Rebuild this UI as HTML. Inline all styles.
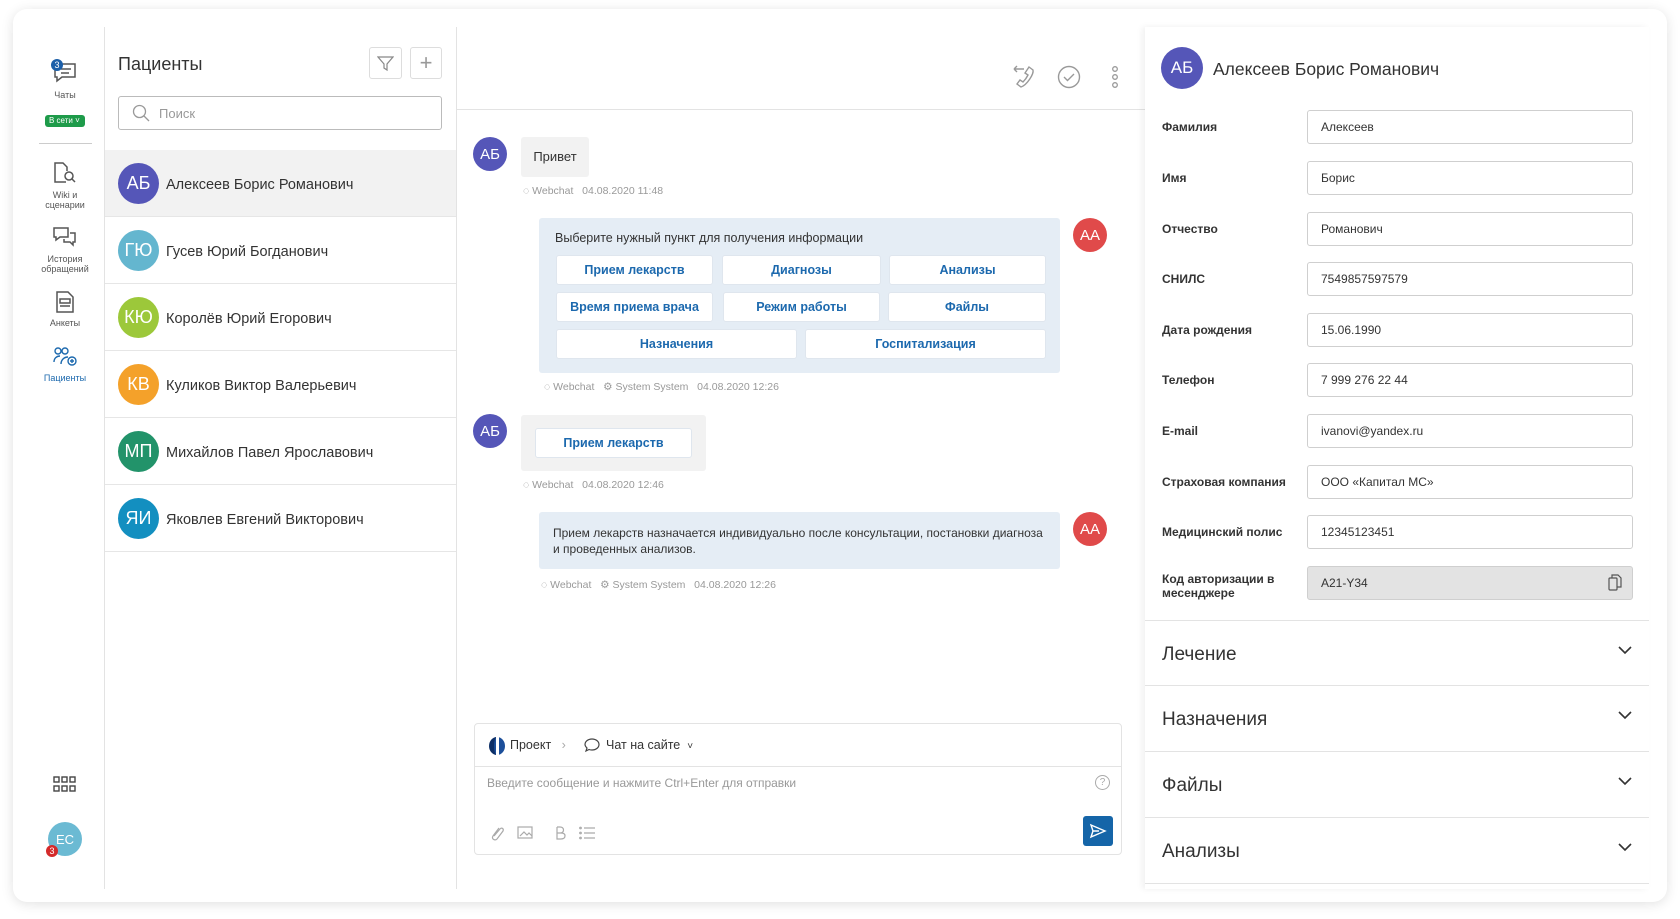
<!DOCTYPE html>
<html><head><meta charset="utf-8"><style>
*{box-sizing:border-box;margin:0;padding:0}
body{width:1680px;height:919px;background:#fff;font-family:"Liberation Sans","DejaVu Sans",sans-serif;color:#333;position:relative;overflow:hidden}
.a{position:absolute}
.card{left:13px;top:9px;width:1654px;height:893px;border-radius:14px;background:#fff;box-shadow:0 2px 12px rgba(0,0,0,.12)}
.av{position:absolute;border-radius:50%;color:#fff;display:flex;align-items:center;justify-content:center}
.sl{position:absolute;left:30px;width:70px;text-align:center;font-size:9px;color:#555;line-height:10px}
.row{position:absolute;left:105px;width:351px;height:67px;border-bottom:1px solid #e6e6e6}
.row .av{left:13px;top:13px;width:41px;height:41px;font-size:18px}
.row span{position:absolute;left:61px;top:27px;font-size:14.5px;color:#333}
.meta{position:absolute;font-size:10.5px;color:#999}
.btn{position:absolute;background:#fff;border:1px solid #dfe6ee;border-radius:3px;color:#1c69ae;font-size:12.5px;font-weight:bold;display:flex;align-items:center;justify-content:center;height:30px}
.lab{position:absolute;left:1162px;font-size:12px;font-weight:bold;color:#333}
.inp{position:absolute;left:1307px;width:326px;height:34px;border:1px solid #cfcfcf;border-radius:3px;padding-left:13px;font-size:12px;line-height:32px;color:#333}
.sec{position:absolute;left:1145px;width:504px;border-bottom:1px solid #e3e3e3;height:66px}
.sec span{position:absolute;left:17px;top:23px;font-size:19px;color:#333}
.sec svg{position:absolute;right:17px;top:25px}
</style></head><body>
<div class="a card"></div>
<!-- sidebar -->
<div class="a" style="left:104px;top:27px;width:1px;height:862px;background:#e3e3e3"></div>
<svg class="a" style="left:52px;top:58px" width="26" height="26" viewBox="0 0 26 26" fill="none" stroke="#555" stroke-width="1.5"><path d="M3 6h20v13H10l-5 4v-4H3z"/><path d="M9 11h10M9 15h8"/></svg>
<div class="av" style="left:51px;top:59px;width:12px;height:12px;background:#1c5fa8;font-size:9px">3</div>
<div class="sl" style="top:90px">Чаты</div>
<div class="a" style="left:45px;top:115px;width:40px;height:12px;background:#1e9b4a;border-radius:3px;color:#fff;font-size:8px;line-height:12px;padding-left:4px">В сети ˅</div>
<div class="a" style="left:39px;top:143px;width:53px;height:1px;background:#ccc"></div>
<svg class="a" style="left:52px;top:161px" width="26" height="24" viewBox="0 0 26 24" fill="none" stroke="#555" stroke-width="1.5"><path d="M14 21H3V2h8l4 4v4"/><circle cx="17" cy="15" r="4"/><path d="M20 18l3 3"/></svg>
<div class="sl" style="top:190px">Wiki и<br>сценарии</div>
<svg class="a" style="left:52px;top:225px" width="26" height="24" viewBox="0 0 26 24" fill="none" stroke="#555" stroke-width="1.5"><path d="M2 3h14v9H8l-4 3v-3H2z"/><path d="M18 8h5v9h-2v3l-3-3h-6v-3"/></svg>
<div class="sl" style="top:254px">История<br>обращений</div>
<svg class="a" style="left:55px;top:290px" width="20" height="24" viewBox="0 0 20 24" fill="none" stroke="#555" stroke-width="1.5"><path d="M2 2h11l5 5v15H2z"/><path d="M5 9h10v4H5zM5 16h10"/></svg>
<div class="sl" style="top:318px">Анкеты</div>
<svg class="a" style="left:52px;top:346px" width="26" height="22" viewBox="0 0 26 22" fill="none" stroke="#1c69ae" stroke-width="1.4"><circle cx="6" cy="5" r="3"/><circle cx="13" cy="5" r="3"/><path d="M2 16c0-4 3-6 6-6M9 18c0-4 3-7 7-7"/><circle cx="20" cy="15" r="4"/><path d="M20 13v4M18 15h4"/></svg>
<div class="sl" style="top:373px;color:#1c69ae">Пациенты</div>
<svg class="a" style="left:53px;top:776px" width="23" height="16" viewBox="0 0 23 16" fill="none" stroke="#444" stroke-width="1.4"><rect x="1" y="1" width="5" height="5"/><rect x="9" y="1" width="5" height="5"/><rect x="17" y="1" width="5" height="5"/><rect x="1" y="10" width="5" height="5"/><rect x="9" y="10" width="5" height="5"/><rect x="17" y="10" width="5" height="5"/></svg>
<div class="av" style="left:48px;top:822px;width:34px;height:34px;background:#6bbad3;font-size:13px">EC</div>
<div class="av" style="left:46px;top:845px;width:12px;height:12px;background:#d42a2a;font-size:9px">3</div>
<!-- patients -->
<div class="a" style="left:456px;top:27px;width:1px;height:862px;background:#e3e3e3"></div>
<div class="a" style="left:118px;top:54px;font-size:18px;color:#333">Пациенты</div>
<div class="a" style="left:369px;top:47px;width:33px;height:32px;border:1px solid #ddd;border-radius:3px"></div>
<svg class="a" style="left:377px;top:55px" width="17" height="17" viewBox="0 0 17 17" fill="none" stroke="#888" stroke-width="1.2"><path d="M1 2h15l-6 7v6l-3-2V9z"/></svg>
<div class="a" style="left:410px;top:47px;width:32px;height:32px;border:1px solid #ddd;border-radius:3px;color:#999;font-size:22px;text-align:center;line-height:29px">+</div>
<div class="a" style="left:118px;top:96px;width:324px;height:34px;border:1px solid #bbb;border-radius:3px"></div>
<svg class="a" style="left:132px;top:104px" width="18" height="18" viewBox="0 0 18 18" fill="none" stroke="#999" stroke-width="1.3"><circle cx="7.5" cy="7.5" r="6"/><path d="M12 12l5 5"/></svg>
<div class="a" style="left:159px;top:106px;font-size:13px;color:#999">Поиск</div>
<div class="a" style="left:105px;top:150px;width:351px;height:67px;background:#f2f2f2"></div>
<div class="row" style="top:150px"><div class="av" style="background:#5556b8">АБ</div><span>Алексеев Борис Романович</span></div>
<div class="row" style="top:217px"><div class="av" style="background:#64b6cf">ГЮ</div><span>Гусев Юрий Богданович</span></div>
<div class="row" style="top:284px"><div class="av" style="background:#9cc83a">КЮ</div><span>Королёв Юрий Егорович</span></div>
<div class="row" style="top:351px"><div class="av" style="background:#f4a12a">КВ</div><span>Куликов Виктор Валерьевич</span></div>
<div class="row" style="top:418px"><div class="av" style="background:#22936a">МП</div><span>Михайлов Павел Ярославович</span></div>
<div class="row" style="top:485px"><div class="av" style="background:#138fc0">ЯИ</div><span>Яковлев Евгений Викторович</span></div>
<!-- chat -->
<div class="a" style="left:457px;top:109px;width:688px;height:1px;background:#e3e3e3"></div>
<svg class="a" style="left:1011px;top:64px" width="26" height="26" viewBox="0 0 26 26" fill="none" stroke="#999" stroke-width="1.4"><path d="M9 5h4M3 5l3-3M3 5l3 3M3 5h6"/><path d="M18 3l4 3c1 4-6 15-12 17l-4-3 3-4 3 2c2-2 4-5 5-7l-3-2z"/></svg>
<svg class="a" style="left:1057px;top:65px" width="24" height="24" viewBox="0 0 24 24" fill="none" stroke="#999" stroke-width="1.4"><circle cx="12" cy="12" r="10.5"/><path d="M7 12l3.5 3.5L17 9"/></svg>
<svg class="a" style="left:1110px;top:64px" width="10" height="26" viewBox="0 0 10 26" fill="none" stroke="#999" stroke-width="1.3"><circle cx="5" cy="5" r="2.3"/><circle cx="5" cy="13" r="2.3"/><circle cx="5" cy="21" r="2.3"/></svg>
<div class="av" style="left:473px;top:137px;width:34px;height:34px;background:#5556b8;font-size:15px">АБ</div>
<div class="a" style="left:521px;top:137px;width:68px;height:40px;background:#f2f2f2;border-radius:3px;font-size:13px;line-height:40px;text-align:center">Привет</div>
<div class="meta" style="left:523px;top:185px">◌ Webchat &nbsp; 04.08.2020 11:48</div>
<div class="a" style="left:539px;top:218px;width:521px;height:155px;background:#e5edf5;border-radius:3px"></div>
<div class="a" style="left:555px;top:231px;font-size:12.5px;color:#333">Выберите нужный пункт для получения информации</div>
<div class="btn" style="left:556px;top:255px;width:157px">Прием лекарств</div>
<div class="btn" style="left:722px;top:255px;width:159px">Диагнозы</div>
<div class="btn" style="left:889px;top:255px;width:157px">Анализы</div>
<div class="btn" style="left:556px;top:292px;width:157px">Время приема врача</div>
<div class="btn" style="left:723px;top:292px;width:157px">Режим работы</div>
<div class="btn" style="left:888px;top:292px;width:158px">Файлы</div>
<div class="btn" style="left:556px;top:329px;width:241px">Назначения</div>
<div class="btn" style="left:805px;top:329px;width:241px">Госпитализация</div>
<div class="av" style="left:1073px;top:218px;width:34px;height:34px;background:#e04a4a;font-size:15px">АА</div>
<div class="meta" style="left:544px;top:381px">◌ Webchat &nbsp; ⚙ System System &nbsp; 04.08.2020 12:26</div>
<div class="av" style="left:473px;top:414px;width:34px;height:34px;background:#5556b8;font-size:15px">АБ</div>
<div class="a" style="left:521px;top:415px;width:185px;height:56px;background:#f2f2f2;border-radius:3px"></div>
<div class="btn" style="left:535px;top:428px;width:157px">Прием лекарств</div>
<div class="meta" style="left:523px;top:479px">◌ Webchat &nbsp; 04.08.2020 12:46</div>
<div class="a" style="left:539px;top:512px;width:521px;height:57px;background:#e5edf5;border-radius:3px;padding:13px 0 0 14px;font-size:12px;line-height:16px;color:#333">Прием лекарств назначается индивидуально после консультации, постановки диагноза<br>и проведенных анализов.</div>
<div class="av" style="left:1073px;top:512px;width:34px;height:34px;background:#e04a4a;font-size:15px">АА</div>
<div class="meta" style="left:541px;top:579px">◌ Webchat &nbsp; ⚙ System System &nbsp; 04.08.2020 12:26</div>
<!-- composer -->
<div class="a" style="left:474px;top:723px;width:648px;height:132px;border:1px solid #e3e3e3;border-radius:4px"></div>
<div class="a" style="left:475px;top:766px;width:646px;height:1px;background:#e3e3e3"></div>
<div class="a" style="left:489px;top:737px;width:16px;height:18px;border-radius:50%;background:#1c4f9a;border-left:5px solid #0d2f66"></div>
<div class="a" style="left:496px;top:737px;width:3px;height:18px;background:#fff"></div>
<div class="a" style="left:510px;top:738px;font-size:12.5px;color:#333">Проект &nbsp;&nbsp;<span style="color:#aaa">›</span></div>
<svg class="a" style="left:584px;top:737px" width="16" height="16" viewBox="0 0 16 16" fill="none" stroke="#444" stroke-width="1.2"><path d="M8 2c4 0 7 2.5 7 5.5S12 13 8 13c-1 0-2 0-3-.5L2 14l1-3C2 10 1 9 1 7.5 1 4.5 4 2 8 2z"/></svg>
<div class="a" style="left:606px;top:738px;font-size:12.5px;color:#333">Чат на сайте &nbsp;<span style="font-size:10px">˅</span></div>
<div class="a" style="left:487px;top:776px;font-size:12px;color:#999">Введите сообщение и нажмите Ctrl+Enter для отправки</div>
<div class="a" style="left:1095px;top:775px;width:15px;height:15px;border:1px solid #aaa;border-radius:50%;font-size:10px;color:#aaa;text-align:center;line-height:13px">?</div>
<svg class="a" style="left:488px;top:824px;" width="110" height="18" viewBox="0 0 110 18" fill="none" stroke="#aaa" stroke-width="1.2"><path d="M11 4L5 12c-2 3 2 5 4 3l6-8c1-2-1-4-3-2L6 12"/><rect x="30" y="3" width="14" height="11"/><path d="M32 12l4-4 3 3 2-2 3 3"/><path d="M69 3v12h4c3 0 4-1.5 4-3.2S76 9 73 9h-4M69 9h3c2.5 0 3.5-1 3.5-3S74 3 72 3h-3"/><path d="M96 4h11M96 9h11M96 14h11"/><circle cx="92.5" cy="4" r=".8"/><circle cx="92.5" cy="9" r=".8"/><circle cx="92.5" cy="14" r=".8"/></svg>
<div class="a" style="left:1083px;top:816px;width:30px;height:30px;background:#1565a8;border-radius:3px"></div>
<svg class="a" style="left:1089px;top:823px" width="18" height="16" viewBox="0 0 18 16" fill="none" stroke="#fff" stroke-width="1.4"><path d="M2 2l14 6-14 6 2-6zM4 8h6"/></svg>
<!-- right panel -->
<div class="a" style="left:1145px;top:27px;width:504px;height:862px;background:#fff;box-shadow:-3px 0 6px rgba(0,0,0,.06)"></div>
<div class="av" style="left:1161px;top:47px;width:42px;height:42px;background:#5556b8;font-size:17px">АБ</div>
<div class="a" style="left:1213px;top:59px;font-size:17.5px;color:#333">Алексеев Борис Романович</div>
<div class="lab" style="top:120px">Фамилия</div><div class="inp" style="top:110px">Алексеев</div>
<div class="lab" style="top:171px">Имя</div><div class="inp" style="top:161px">Борис</div>
<div class="lab" style="top:222px">Отчество</div><div class="inp" style="top:212px">Романович</div>
<div class="lab" style="top:272px">СНИЛС</div><div class="inp" style="top:262px">7549857597579</div>
<div class="lab" style="top:323px">Дата рождения</div><div class="inp" style="top:313px">15.06.1990</div>
<div class="lab" style="top:373px">Телефон</div><div class="inp" style="top:363px">7 999 276 22 44</div>
<div class="lab" style="top:424px">E-mail</div><div class="inp" style="top:414px">ivanovi@yandex.ru</div>
<div class="lab" style="top:475px">Страховая компания</div><div class="inp" style="top:465px">ООО «Капитал МС»</div>
<div class="lab" style="top:525px">Медицинский полис</div><div class="inp" style="top:515px">12345123451</div>
<div class="lab" style="top:572px;line-height:14px">Код авторизации в<br>месенджере</div><div class="inp" style="top:566px;background:#e3e3e3">A21-Y34</div>
<svg class="a" style="left:1608px;top:574px" width="14" height="17" viewBox="0 0 14 17" fill="none" stroke="#555" stroke-width="1.2"><rect x="1" y="4" width="8" height="12" rx="1"/><path d="M4 4V1h6l3 3v9H9"/></svg>
<div class="sec" style="top:620px;border-top:1px solid #e3e3e3"><span>Лечение</span><svg width="14" height="9" viewBox="0 0 14 9" fill="none" stroke="#333" stroke-width="1.6"><path d="M1 1l6 6 6-6"/></svg></div>
<div class="sec" style="top:686px"><span>Назначения</span><svg width="14" height="9" viewBox="0 0 14 9" fill="none" stroke="#333" stroke-width="1.6"><path d="M1 1l6 6 6-6"/></svg></div>
<div class="sec" style="top:752px"><span>Файлы</span><svg width="14" height="9" viewBox="0 0 14 9" fill="none" stroke="#333" stroke-width="1.6"><path d="M1 1l6 6 6-6"/></svg></div>
<div class="sec" style="top:818px"><span>Анализы</span><svg width="14" height="9" viewBox="0 0 14 9" fill="none" stroke="#333" stroke-width="1.6"><path d="M1 1l6 6 6-6"/></svg></div>
</body></html>
